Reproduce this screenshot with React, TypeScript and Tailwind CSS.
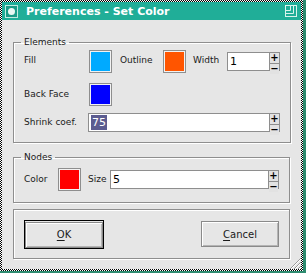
import type { ReactNode } from 'react';

const FONT = "font-['DejaVu_Sans',sans-serif]";

function Swatch({ color }: { color: string }) {
    return (
        <div className="w-[23px] h-[23px] shrink-0 border border-[#8e8e8e] p-px bg-[#f2f2f2]">
            <div className="w-full h-full" style={{ backgroundColor: color }} />
        </div>
    );
}

function SpinBox({ value, selected, className }: { value: string; selected?: boolean; className: string }) {
    return (
        <div className={`flex h-[19px] border border-[#8e8e8e] bg-white ${className}`}>
            <div className="flex-1 flex items-center pl-[2px] text-[11px] text-black">
                <span className={selected ? 'bg-[#5c5c90] text-white leading-[15px] px-px' : 'leading-[15px]'}>{value}</span>
            </div>
            <div className="w-[10px] flex flex-col border-l border-[#8e8e8e]">
                <div className="flex-1 flex items-center justify-center bg-[#e2e2e2] border-b border-[#8e8e8e] text-[10px] font-bold leading-none text-black">+</div>
                <div className="flex-1 flex items-center justify-center bg-[#e2e2e2] text-[10px] font-bold leading-none text-black">−</div>
            </div>
        </div>
    );
}

function Group({ title, children, className }: { title: string; children: ReactNode; className: string }) {
    return (
        <fieldset className={`mx-[11px] border border-[#8e8e8e] shadow-[inset_1px_1px_0_#fff,1px_1px_0_#fff] pl-[7px] pr-[10px] ${className}`}>
            <legend className="px-[3px] text-[9px] leading-[12px] text-[#1a1a1a]">{title}</legend>
            {children}
        </fieldset>
    );
}

function Label({ children, className = '' }: { children: ReactNode; className?: string }) {
    return <span className={`text-[9px] text-[#1a1a1a] ${className}`}>{children}</span>;
}

export default function App() {
    return (
        <div className={`w-[306px] h-[273px] bg-[#2e8b70] ${FONT}`}>
            <div className="relative w-[303px] h-[271px] p-[2px] bg-[image:repeating-conic-gradient(#000_0%_25%,#fff_0%_50%)] bg-size-[2px_2px]">
                <div className="flex flex-col h-full bg-[#e6e6e6]">
                    {/* title bar */}
                    <div className="h-[18px] shrink-0 flex items-center bg-[#20ae98] pl-[3px] pr-[4px]">
                        <svg width="13" height="13" viewBox="0 0 13 13" className="shrink-0">
                            <rect x="0.5" y="0.5" width="12" height="12" fill="#1c9c88" stroke="#bfe9df" />
                            <circle cx="6.5" cy="6.5" r="3.5" fill="#e8f6f2" />
                        </svg>
                        <span className="ml-[8px] text-[11px] font-bold text-white leading-none">Preferences - Set Color</span>
                        <svg width="12" height="12" viewBox="0 0 12 12" className="ml-auto shrink-0" fill="none" stroke="#d8f3ec">
                            <rect x="0.5" y="0.5" width="11" height="11" />
                            <path d="M5.5 0.5 V5.5 H0.5" />
                            <path d="M8.5 0.5 V8.5 H0.5" />
                        </svg>
                    </div>

                    <Group title="Elements" className="mt-[16px] pt-[2px] pb-[10px]">
                        <div className="flex items-center h-[22px] ml-[3px]">
                            <Label className="w-[65px]">Fill</Label>
                            <Swatch color="#00aaff" />
                            <Label className="ml-[8px] w-[43px]">Outline</Label>
                            <Swatch color="#ff5500" />
                            <Label className="ml-[7px] w-[34px]">Width</Label>
                            <SpinBox value="1" className="w-[53px]" />
                        </div>
                        <div className="flex items-center h-[23px] mt-[11px] ml-[3px]">
                            <Label className="w-[65px]">Back Face</Label>
                            <Swatch color="#0000ff" />
                        </div>
                        <div className="flex items-center h-[19px] mt-[7px] ml-[3px]">
                            <Label className="w-[64px]">Shrink coef.</Label>
                            <SpinBox value="75" selected className="flex-1" />
                        </div>
                    </Group>

                    <Group title="Nodes" className="mt-[8px] pt-[5px] pb-[11px]">
                        <div className="flex items-center h-[23px] ml-[3px]">
                            <Label className="w-[34px]">Color</Label>
                            <Swatch color="#ff0000" />
                            <Label className="ml-[7px] w-[22px]">Size</Label>
                            <SpinBox value="5" className="flex-1" />
                        </div>
                    </Group>

                    <div className="mx-[11px] mt-[6px] border border-[#8e8e8e] shadow-[inset_1px_1px_0_#fff,1px_1px_0_#fff] pl-[10px] pr-[10px] pt-[10px] pb-[9px] flex items-center justify-between">
                        <div className="border border-black">
                            <button className="w-[78px] h-[26px] border border-[#8a8a8a] bg-[#e6e6e6] shadow-[inset_1px_1px_0_#fff,inset_-1px_-1px_0_#b4b4b4] text-[10px] text-[#1a1a1a]">
                                <span className="underline underline-offset-2">O</span>K
                            </button>
                        </div>
                        <button className="w-[78px] h-[26px] border border-[#8a8a8a] bg-[#e6e6e6] shadow-[inset_1px_1px_0_#fff,inset_-1px_-1px_0_#b4b4b4] text-[10px] text-[#1a1a1a]">
                            <span className="underline underline-offset-2">C</span>ancel
                        </button>
                    </div>
                </div>
                <svg width="12" height="12" viewBox="0 0 12 12" className="absolute right-[2px] bottom-[2px]" stroke="#9a9a9a">
                    <path d="M12 1 L1 12 M12 5 L5 12 M12 9 L9 12" />
                    <path d="M12 2 L2 12 M12 6 L6 12 M12 10 L10 12" stroke="#fff" />
                </svg>
            </div>
        </div>
    );
}
